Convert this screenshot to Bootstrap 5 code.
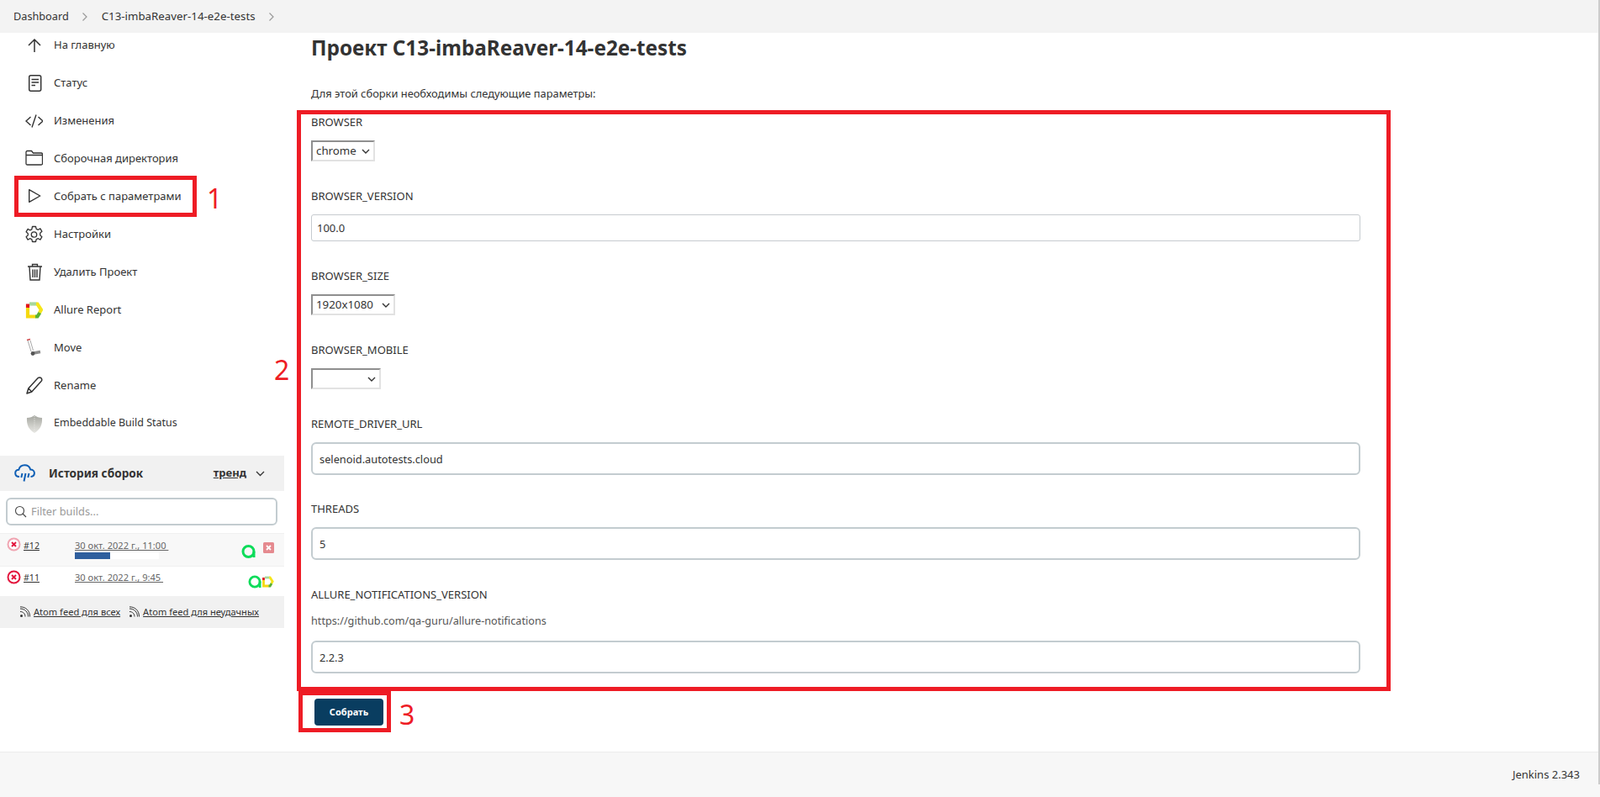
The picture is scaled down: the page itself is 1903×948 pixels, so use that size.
<!DOCTYPE html>
<html lang="ru">
<head>
  <meta charset="UTF-8">
  <title>C13-imbaReaver-14-e2e-tests Jenkins</title>
  <link href="https://cdn.jsdelivr.net/npm/bootstrap@5.3.3/dist/css/bootstrap.min.css" rel="stylesheet">
  <style>
    html, body { height: 100%; overflow: hidden; }
    body { font-family: "Noto Sans", "Open Sans", sans-serif; font-size: 13px; color: #333; background: #fff; position: relative; }
    a { color: inherit; }

    .crumb-bar { height: 39px; background: #f3f3f3; padding-left: 16px; position: relative; z-index: 2; font-size: 12.7px; }
    .crumb-bar a { text-decoration: none; color: #333; }
    .crumb-bar .crumb-job { font-size: 13.3px; }
    .crumb-sep { margin: 0 16px 0 15px; width: 8px; height: 12px; }

    .side-col { width: 338px; flex: none; }
    .task-list { margin-top: -8px; margin-bottom: 0; padding: 0; list-style: none; }
    .task-row { height: 45px; padding-left: 30px; gap: 13px; color: #333; text-decoration: none; font-size: 13px; }
    .task-row.slim { font-size: 12.5px; }
    .task-icon { width: 21px; height: 24px; flex: none; }

    .hist-head { height: 42px; margin-top: 16px; background: #f1f1f1; padding: 0 23px 0 17px; }
    .hist-title { font-weight: 700; margin-left: 16px; font-size: 13.6px; }
    .hist-trend { font-weight: 700; text-decoration: underline; margin-right: 11px; font-size: 13px; }
    .filter-wrap { padding: 8px 8px 9px 7px; }
    .filter-box { height: 33px; border: 2px solid #c3ccd0; border-radius: 6px; padding-left: 8px; gap: 5px; }
    .filter-box input { border: 0; outline: 0; width: 100%; font-size: 12.8px; background: transparent; padding: 0; }
    .filter-box input::placeholder { color: #9a9a9a; opacity: 1; }
    .build-row { height: 40px; background: #f8f8f8; border-top: 1px solid #f0f0f0; border-bottom: 1px solid #f0f0f0; }
    .build-row.plain { height: 35px; background: #fff; border: 0; }
    .build-state { position: absolute; left: 8px; top: 4px; }
    .build-num { position: absolute; left: 28px; top: 5px; line-height: 18px; font-size: 10.6px; }
    .build-date { position: absolute; left: 89px; top: 5px; line-height: 18px; color: #666; font-size: 11.1px; }
    .build-row.plain .build-num, .build-row.plain .build-date { top: 4px; }
    .build-bar { position: absolute; left: 89px; top: 22px; width: 100px; height: 8px; background: #fff; }
    .build-fill { height: 100%; background: #2f5f9e; }
    .build-badges { position: absolute; right: 12px; top: 10px; gap: 9px; }
    .feed-row { height: 38px; background: #f1f1f1; gap: 10px; font-size: 11.1px; padding-left: 23px; }

    .main-col { padding: 0 0 0 370px; margin-left: -338px; }
    .page-title { font-size: 24.3px; font-weight: 700; line-height: 32px; margin: 2px 0 0; color: #333; }
    .page-note { line-height: 20px; margin: 28px 0 14px; font-size: 12.86px; }
    .param-block { margin-bottom: 31px; width: 1248px; }
    .param-block.tight { margin-bottom: 30px; }
    .param-label { display: block; line-height: 20px; margin: 0 0 12px; }
    .param-hint { line-height: 20px; margin: -1px 0 14px; color: #555; font-size: 12.67px; }
    .param-select { display: block; height: 25px; border: 2px solid; border-color: #8f8f8f #e2e2e2 #e2e2e2 #8f8f8f; background: #fff url("data:image/svg+xml,%3Csvg xmlns='http://www.w3.org/2000/svg' width='10' height='6'%3E%3Cpath d='M1 1l4 4 4-4' fill='none' stroke='%23333' stroke-width='1.4'/%3E%3C/svg%3E") no-repeat right 4px center; appearance: none; font-size: 13.3px; padding: 0 0 0 4px; color: #333; border-radius: 0; }
    .select-browser { width: 76px; }
    .select-size { width: 100px; }
    .select-mobile { width: 83px; }
    .param-input { height: 32px; border: 1px solid #c6cbcf; border-radius: 3px; padding: 0 6px; font-size: 13px; color: #333; box-shadow: none; }
    .param-input.thick { height: 39px; border: 2px solid #c3ccd0; border-radius: 6px; padding: 0 8px; font-size: 12.8px; }
    .submit-btn { width: 82px; height: 32px; margin: 30px 0 0 4px; padding: 0; background: #093d60; border: 0; border-radius: 4px; color: #fff; font-size: 11px; font-weight: 700; }

    .page-foot { height: 54px; background: #f7f7f7; border-top: 1px solid #ececec; padding-right: 24px; }
    .scroll-thumb { position: absolute; top: 0; right: 0; width: 2px; height: 933px; background: #ccc; z-index: 3; }

    .mark-box { position: absolute; border: 5px solid #ee1c25; z-index: 4; pointer-events: none; }
    .mark-num { position: absolute; color: #ee1c25; font-size: 32px; line-height: 32px; z-index: 4; font-family: "Noto Sans", sans-serif; }
  </style>
</head>
<body class="d-flex flex-column">

  <nav class="crumb-bar d-flex align-items-center">
    <a href="#">Dashboard</a>
    <svg class="crumb-sep" viewBox="0 0 8 12"><path d="M1.500 1.500 6 6l-4.500 4.500" fill="none" stroke="#999" stroke-width="1.200"/></svg>
    <a class="crumb-job" href="#">C13-imbaReaver-14-e2e-tests</a>
    <svg class="crumb-sep" viewBox="0 0 8 12"><path d="M1.500 1.500 6 6l-4.500 4.500" fill="none" stroke="#999" stroke-width="1.200"/></svg>
  </nav>

  <div class="d-flex flex-grow-1">
    <aside class="side-col">
      <ul class="task-list">
        <li><a class="task-row d-flex align-items-center" href="#">
          <svg class="task-icon" viewBox="0 0 21 24"><path d="M11 20V5M4 12l7-7 7 7" fill="none" stroke="#333" stroke-width="1.500"/></svg>На главную</a></li>
        <li><a class="task-row d-flex align-items-center" href="#">
          <svg class="task-icon" viewBox="0 0 21 24"><rect x="4.700" y="2.700" width="14" height="18.600" rx="2" fill="none" stroke="#333" stroke-width="1.500"/><path d="M7.500 7.500h8.500M7.500 11h8.500M7.500 14.500h4.500" stroke="#333" stroke-width="1.300"/></svg>Статус</a></li>
        <li><a class="task-row d-flex align-items-center" href="#">
          <svg class="task-icon" viewBox="0 0 21 24"><path d="M6.500 7l-5.500 5 5.500 5M15.500 7l5.500 5-5.500 5M13 4.500l-5 15" fill="none" stroke="#333" stroke-width="1.400"/></svg>Изменения</a></li>
        <li><a class="task-row d-flex align-items-center" href="#">
          <svg class="task-icon" viewBox="0 0 21 24"><path d="M1 4c0-1 .6-1.500 1.500-1.500h5L9.500 5h9.500c1 0 1.500.6 1.500 1.500v11c0 1-.6 1.500-1.500 1.500H2.500c-1 0-1.500-.6-1.500-1.500zM1 7.500h19.500" fill="none" stroke="#333" stroke-width="1.300"/></svg>Сборочная директория</a></li>
        <li><a class="task-row d-flex align-items-center" href="#">
          <svg class="task-icon" viewBox="0 0 21 24"><path d="M4.700 3.700v14.600l13-7.300z" fill="none" stroke="#333" stroke-width="1.400" stroke-linejoin="round"/></svg>Собрать с параметрами</a></li>
        <li><a class="task-row d-flex align-items-center" href="#">
          <svg class="task-icon" viewBox="0 0 21 24"><path d="M8.500 2.500h4l.7 2.800 2.200 1 2.500-1.400 2 3.400-2.200 1.900v2.600l2.200 1.900-2 3.400-2.500-1.400-2.200 1-.7 2.800h-4l-.7-2.800-2.200-1-2.500 1.400-2-3.400 2.200-1.900V10.700L1.100 8.800l2-3.400 2.500 1.400 2.200-1z" fill="none" stroke="#333" stroke-width="1.300" stroke-linejoin="round"/><circle cx="10.500" cy="12" r="3.200" fill="none" stroke="#333" stroke-width="1.300"/></svg>Настройки</a></li>
        <li><a class="task-row d-flex align-items-center" href="#">
          <svg class="task-icon" viewBox="0 0 21 24"><path d="M3 5h17M8.500 5V2.500h6V5M5 5l1 16h11l1-16M9 8.500v9.500M11.500 8.500v9.500M14 8.500v9.500" fill="none" stroke="#333" stroke-width="1.400"/></svg>Удалить Проект</a></li>
        <li><a class="task-row d-flex align-items-center" href="#">
          <svg class="task-icon" viewBox="0 0 21 24"><path d="M3 9V4.500" stroke="#e2151b" stroke-width="4.200"/><path d="M5 4.500h8.500" stroke="#a8d79c" stroke-width="4.200"/><path d="M13 4.500h1.500l4.500 7-2 3.500" fill="none" stroke="#f6e61a" stroke-width="4.200"/><path d="M3 9v10.500h9.500" fill="none" stroke="#f6d90f" stroke-width="4.200"/><path d="M12 19.500h2.500l2.800-4.500" fill="none" stroke="#5ab131" stroke-width="4.200"/></svg>Allure Report</a></li>
        <li><a class="task-row d-flex align-items-center" href="#">
          <svg class="task-icon" viewBox="0 0 21 24"><path d="M2 2.500l4-1" stroke="#d0484a" stroke-width="1.500"/><path d="M3 3l4 13M6 3l3.500 12" stroke="#a9a9a9" stroke-width="1"/><path d="M10 18l8-1.500" stroke="#8c8c8c" stroke-width="3.500"/><circle cx="9" cy="18.500" r="2.400" fill="#555"/></svg>Move</a></li>
        <li><a class="task-row d-flex align-items-center" href="#">
          <svg class="task-icon" viewBox="0 0 21 24"><path d="M2 21l1.800-6L15 2.800c1.200-1.200 3-1.200 4 0s1 2.600 0 3.800L7.800 19zM3.800 15l4 4" fill="none" stroke="#333" stroke-width="1.500" stroke-linejoin="round"/></svg>Rename</a></li>
        <li><a class="task-row slim d-flex align-items-center" href="#">
          <svg class="task-icon" viewBox="0 0 21 24"><defs><linearGradient id="shieldFade" x1="0" y1="0" x2="0" y2="1"><stop offset="0" stop-color="#a4a69f"/><stop offset=".6" stop-color="#cfcfca"/><stop offset="1" stop-color="#e6e6e2"/></linearGradient></defs><path d="M11 2c2.500 2 5.500 3 9 3 .5 8-2 14-9 18-7-4-9.500-10-9-18 3.500 0 6.500-1 9-3z" fill="url(#shieldFade)"/><path d="M11 3v19" stroke="#e8e8e4" stroke-dasharray="1 1.500"/></svg>Embeddable Build Status</a></li>
      </ul>

      <div class="hist-head d-flex align-items-center">
        <svg width="25" height="22" viewBox="0 0 25 22"><path d="M6 15C3 15 1.200 13.200 1.200 10.700 1.200 8.400 3 6.700 5.300 6.700 6.200 3.400 8.800 1.300 12.300 1.300c3.400 0 6 2.100 6.900 5.200 2.700 0 4.700 1.800 4.700 4.200 0 2.400-1.800 4-4.400 4.300" fill="none" stroke="#0f5fb5" stroke-width="2"/><path d="M9.500 11l-1.200 5M13.500 11l-2 9.500M17.500 11l-1.200 5" stroke="#0f5fb5" stroke-width="2"/></svg>
        <span class="hist-title flex-grow-1">История сборок</span>
        <a class="hist-trend" href="#">тренд</a>
        <svg width="11" height="7" viewBox="0 0 11 7"><path d="M1 1l4.500 4.500L10 1" fill="none" stroke="#333" stroke-width="1.300"/></svg>
      </div>

      <div class="filter-wrap">
        <div class="filter-box d-flex align-items-center">
          <svg width="15" height="15" viewBox="0 0 15 15" class="flex-shrink-0"><circle cx="6.500" cy="6.500" r="5" fill="none" stroke="#444" stroke-width="1.100"/><path d="M10 10l4 4" stroke="#444" stroke-width="1.100"/></svg>
          <input type="text" placeholder="Filter builds...">
        </div>
      </div>

      <div class="build-row position-relative">
        <svg class="build-state" width="17" height="17" viewBox="0 0 17 17"><circle cx="8.500" cy="8.500" r="7" fill="#fff" stroke="#f0a5b2" stroke-width="2"/><path d="M6 6l5 5M11 6l-5 5" stroke="#e3173e" stroke-width="2"/></svg>
        <a class="build-num" href="#">#12</a>
        <a class="build-date" href="#">30 окт. 2022 г., 11:00&nbsp;</a>
        <div class="build-bar"><div class="build-fill" style="width:42%"></div></div>
        <div class="build-badges d-flex align-items-center">
          <svg width="17" height="17" viewBox="0 0 17 17"><circle cx="8.500" cy="9" r="6.500" fill="none" stroke="#0ddc5a" stroke-width="3"/><path d="M15 9v7" stroke="#0ddc5a" stroke-width="3"/></svg>
          <svg width="13" height="13" viewBox="0 0 13 13" class="mb-2"><rect width="13" height="13" rx="1.500" fill="#e58a8f"/><path d="M4 4l5 5M9 4l-5 5" stroke="#fff" stroke-width="1.800"/></svg>
        </div>
      </div>
      <div class="build-row plain position-relative">
        <svg class="build-state" width="17" height="17" viewBox="0 0 17 17"><circle cx="8.500" cy="8.500" r="7" fill="#fff" stroke="#e3173e" stroke-width="2"/><path d="M6 6l5 5M11 6l-5 5" stroke="#e3173e" stroke-width="2"/></svg>
        <a class="build-num" href="#">#11</a>
        <a class="build-date" href="#">30 окт. 2022 г., 9:45&nbsp;</a>
        <div class="build-badges d-flex align-items-center gap-0">
          <svg width="16" height="16" viewBox="0 0 17 17"><circle cx="8.500" cy="8.500" r="6.500" fill="none" stroke="#0ddc5a" stroke-width="3"/><path d="M15 8v8" stroke="#0ddc5a" stroke-width="3"/></svg>
          <svg width="15" height="16" viewBox="0 0 21 24"><path d="M3 9V4.500" stroke="#e2151b" stroke-width="4.200"/><path d="M5 4.500h8.500" stroke="#a8d79c" stroke-width="4.200"/><path d="M13 4.500h1.500l4.500 7-2 3.500" fill="none" stroke="#f6e61a" stroke-width="4.200"/><path d="M3 9v10.500h9.500" fill="none" stroke="#f6d90f" stroke-width="4.200"/><path d="M12 19.500h2.500l2.800-4.500" fill="none" stroke="#5ab131" stroke-width="4.200"/></svg>
        </div>
      </div>
      <div class="feed-row d-flex align-items-center">
        <span class="d-flex align-items-center gap-1">
          <svg width="13" height="14" viewBox="0 0 13 14"><circle cx="2.500" cy="11.500" r="1.500" fill="#333"/><path d="M1 6.500c3.500 0 6 2.500 6 6M1 3c5.500 0 9.500 4 9.500 9.500M1 .8c7 0 11.500 4.700 11.500 11.700" fill="none" stroke="#333"/></svg>
          <a href="#">Atom feed для всех</a></span>
        <span class="d-flex align-items-center gap-1">
          <svg width="13" height="14" viewBox="0 0 13 14"><circle cx="2.500" cy="11.500" r="1.500" fill="#333"/><path d="M1 6.500c3.500 0 6 2.500 6 6M1 3c5.500 0 9.500 4 9.500 9.500M1 .8c7 0 11.500 4.700 11.500 11.700" fill="none" stroke="#333"/></svg>
          <a href="#">Atom feed для неудачных</a></span>
      </div>
    </aside>

    <main class="main-col flex-grow-1">
      <h1 class="page-title">Проект C13-imbaReaver-14-e2e-tests</h1>
      <p class="page-note">Для этой сборки необходимы следующие параметры:</p>
      <form>
        <div class="param-block">
          <label class="param-label">BROWSER</label>
          <select class="param-select select-browser"><option>chrome</option></select>
        </div>
        <div class="param-block">
          <label class="param-label">BROWSER_VERSION</label>
          <input class="form-control param-input" value="100.0">
        </div>
        <div class="param-block">
          <label class="param-label">BROWSER_SIZE</label>
          <select class="param-select select-size"><option>1920x1080</option></select>
        </div>
        <div class="param-block">
          <label class="param-label">BROWSER_MOBILE</label>
          <select class="param-select select-mobile"><option></option></select>
        </div>
        <div class="param-block tight">
          <label class="param-label">REMOTE_DRIVER_URL</label>
          <input class="form-control param-input thick" value="selenoid.autotests.cloud">
        </div>
        <div class="param-block">
          <label class="param-label">THREADS</label>
          <input class="form-control param-input thick" value="5">
        </div>
        <div class="param-block mb-0">
          <label class="param-label">ALLURE_NOTIFICATIONS_VERSION</label>
          <div class="param-hint">https://github.com/qa-guru/allure-notifications</div>
          <input class="form-control param-input thick" value="2.2.3">
        </div>
        <button type="button" class="btn submit-btn">Собрать</button>
      </form>
    </main>
  </div>

  <footer class="page-foot d-flex align-items-center justify-content-end flex-shrink-0">Jenkins 2.343</footer>
  <div class="scroll-thumb"></div>

  <!-- red annotations drawn over the screenshot -->
  <div class="mark-box" style="left:17px;top:209px;width:217px;height:49px"></div>
  <div class="mark-box" style="left:353px;top:131px;width:1301px;height:691px"></div>
  <div class="mark-box" style="left:355px;top:822px;width:110px;height:49px"></div>
  <span class="mark-num" style="left:246px;top:220px">1</span>
  <span class="mark-num" style="left:326px;top:424px">2</span>
  <span class="mark-num" style="left:475px;top:834px">3</span>

  <script src="https://cdn.jsdelivr.net/npm/bootstrap@5.3.3/dist/js/bootstrap.bundle.min.js"></script>
</body>
</html>
